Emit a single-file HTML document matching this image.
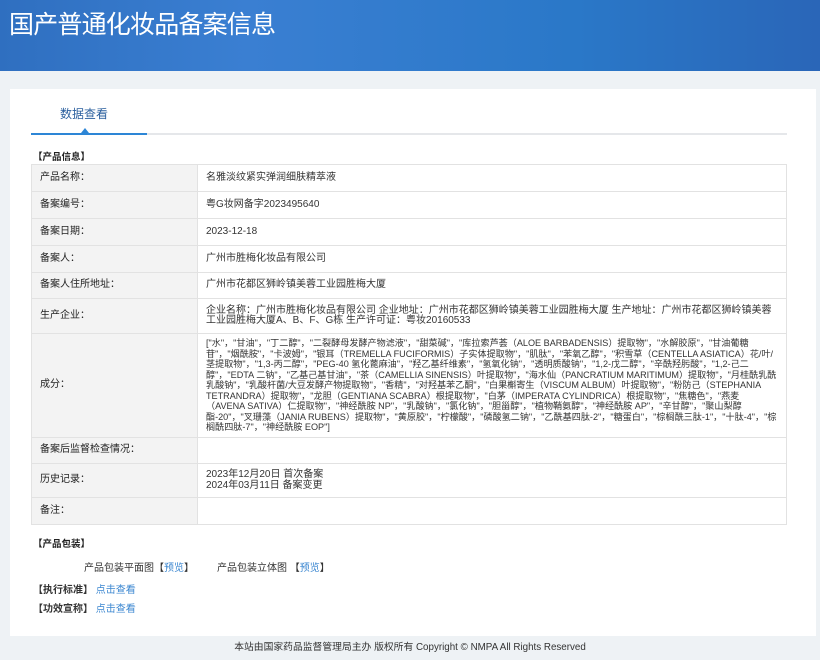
<!DOCTYPE html>
<html><head><meta charset="utf-8"><style>
*{margin:0;padding:0;box-sizing:border-box}
body{width:820px;height:660px;background:#eef2f5;font-family:"Liberation Sans","Noto Sans CJK SC",sans-serif;color:#333;position:relative;overflow:hidden;font-size:10px}
.hd{position:absolute;left:0;top:0;width:820px;height:71px;background:linear-gradient(90deg,#2f6fc0 0%,#3a7fd2 30%,#2a78c8 70%,#2a66b8 100%)}
.hd h1{position:absolute;left:9px;top:5px;font-size:25px;color:#fff;font-weight:normal;letter-spacing:-0.8px;font-family:"Noto Sans CJK SC",sans-serif}
.card{position:absolute;left:10px;top:89px;width:806px;height:547px;background:#fff}
.tab{position:absolute;left:60px;top:105px;font-size:12px;color:#2a5f9e}
.tl{position:absolute;left:31px;top:133px;width:756px;height:2px;background:#e5e7ea}
.tb{position:absolute;left:31px;top:133px;width:116px;height:2px;background:#2d86d6}
.tri{position:absolute;left:81px;top:128px;width:0;height:0;border-left:4px solid transparent;border-right:4px solid transparent;border-bottom:5px solid #2d86d6}
.sec{position:absolute;font-size:9.5px;line-height:11px;color:#222;font-weight:bold}
table{position:absolute;left:31px;top:164px;width:756px;border-collapse:collapse;border:1px solid #8db4e2}
td{border:1px solid #e2e2e2;vertical-align:middle;font-size:10px;line-height:10.5px}
td.l{width:166px;background:#f3f3f3;padding-left:8px;color:#222}
td.v{padding:0 8px;color:#333}
td.c{font-size:9.1px}
a{color:#3a86d0;text-decoration:none}
.ft{position:absolute;left:0;top:636px;width:820px;text-align:center;font-size:9.8px;color:#333;line-height:24px}
</style></head><body>
<div class="hd"><h1>国产普通化妆品备案信息</h1></div>
<div class="card"></div>
<div class="tab">数据查看</div>
<div class="tl"></div><div class="tb"></div><div class="tri"></div>
<div class="sec" style="left:33px;top:152px">【产品信息】</div>
<table>
<tr style="height:27px"><td class="l">产品名称：</td><td class="v">名雅淡纹紧实弹润细肤精萃液</td></tr>
<tr style="height:27px"><td class="l">备案编号：</td><td class="v">粤G妆网备字2023495640</td></tr>
<tr style="height:27px"><td class="l">备案日期：</td><td class="v">2023-12-18</td></tr>
<tr style="height:27px"><td class="l">备案人：</td><td class="v">广州市胜梅化妆品有限公司</td></tr>
<tr style="height:26px"><td class="l">备案人住所地址：</td><td class="v">广州市花都区狮岭镇美蓉工业园胜梅大厦</td></tr>
<tr style="height:35px"><td class="l">生产企业：</td><td class="v">企业名称：广州市胜梅化妆品有限公司 企业地址：广州市花都区狮岭镇美蓉工业园胜梅大厦 生产地址：广州市花都区狮岭镇美蓉工业园胜梅大厦A、B、F、G栋 生产许可证：粤妆20160533</td></tr>
<tr style="height:104px"><td class="l">成分：</td><td class="v c">["水"，"甘油"，"丁二醇"，"二裂酵母发酵产物滤液"，"甜菜碱"，"库拉索芦荟（ALOE BARBADENSIS）提取物"，"水解胶原"，"甘油葡糖苷"，"烟酰胺"，"卡波姆"，"银耳（TREMELLA FUCIFORMIS）子实体提取物"，"肌肽"，"苯氧乙醇"，"积雪草（CENTELLA ASIATICA）花/叶/茎提取物"，"1,3-丙二醇"，"PEG-40 氢化蓖麻油"，"羟乙基纤维素"，"氢氧化钠"，"透明质酸钠"，"1,2-戊二醇"，"辛酰羟肟酸"，"1,2-己二醇"，"EDTA 二钠"，"乙基己基甘油"，"茶（CAMELLIA SINENSIS）叶提取物"，"海水仙（PANCRATIUM MARITIMUM）提取物"，"月桂酰乳酰乳酸钠"，"乳酸杆菌/大豆发酵产物提取物"，"香精"，"对羟基苯乙酮"，"白果槲寄生（VISCUM ALBUM）叶提取物"，"粉防己（STEPHANIA TETRANDRA）提取物"，"龙胆（GENTIANA SCABRA）根提取物"，"白茅（IMPERATA CYLINDRICA）根提取物"，"焦糖色"，"燕麦（AVENA SATIVA）仁提取物"，"神经酰胺 NP"，"乳酸钠"，"氯化钠"，"胆甾醇"，"植物鞘氨醇"，"神经酰胺 AP"，"辛甘醇"，"聚山梨醇酯-20"，"叉珊藻（JANIA RUBENS）提取物"，"黄原胶"，"柠檬酸"，"磷酸氢二钠"，"乙酰基四肽-2"，"糖蛋白"，"棕榈酰三肽-1"，"十肽-4"，"棕榈酰四肽-7"，"神经酰胺 EOP"]</td></tr>
<tr style="height:26px"><td class="l">备案后监督检查情况：</td><td class="v"></td></tr>
<tr style="height:34px"><td class="l">历史记录：</td><td class="v">2023年12月20日 首次备案<br>2024年03月11日 备案变更</td></tr>
<tr style="height:27px"><td class="l">备注：</td><td class="v"></td></tr>
</table>
<div class="sec" style="left:33px;top:539px">【产品包装】</div>
<div style="position:absolute;left:84px;top:559px">产品包装平面图【<a>预览</a>】</div>
<div style="position:absolute;left:217px;top:559px">产品包装立体图 【<a>预览</a>】</div>
<div style="position:absolute;left:33px;top:581px"><b>【执行标准】</b> <a>点击查看</a></div>
<div style="position:absolute;left:33px;top:600px"><b>【功效宣称】</b> <a>点击查看</a></div>
<div class="ft">本站由国家药品监督管理局主办 版权所有 Copyright © NMPA All Rights Reserved</div>
</body></html>
